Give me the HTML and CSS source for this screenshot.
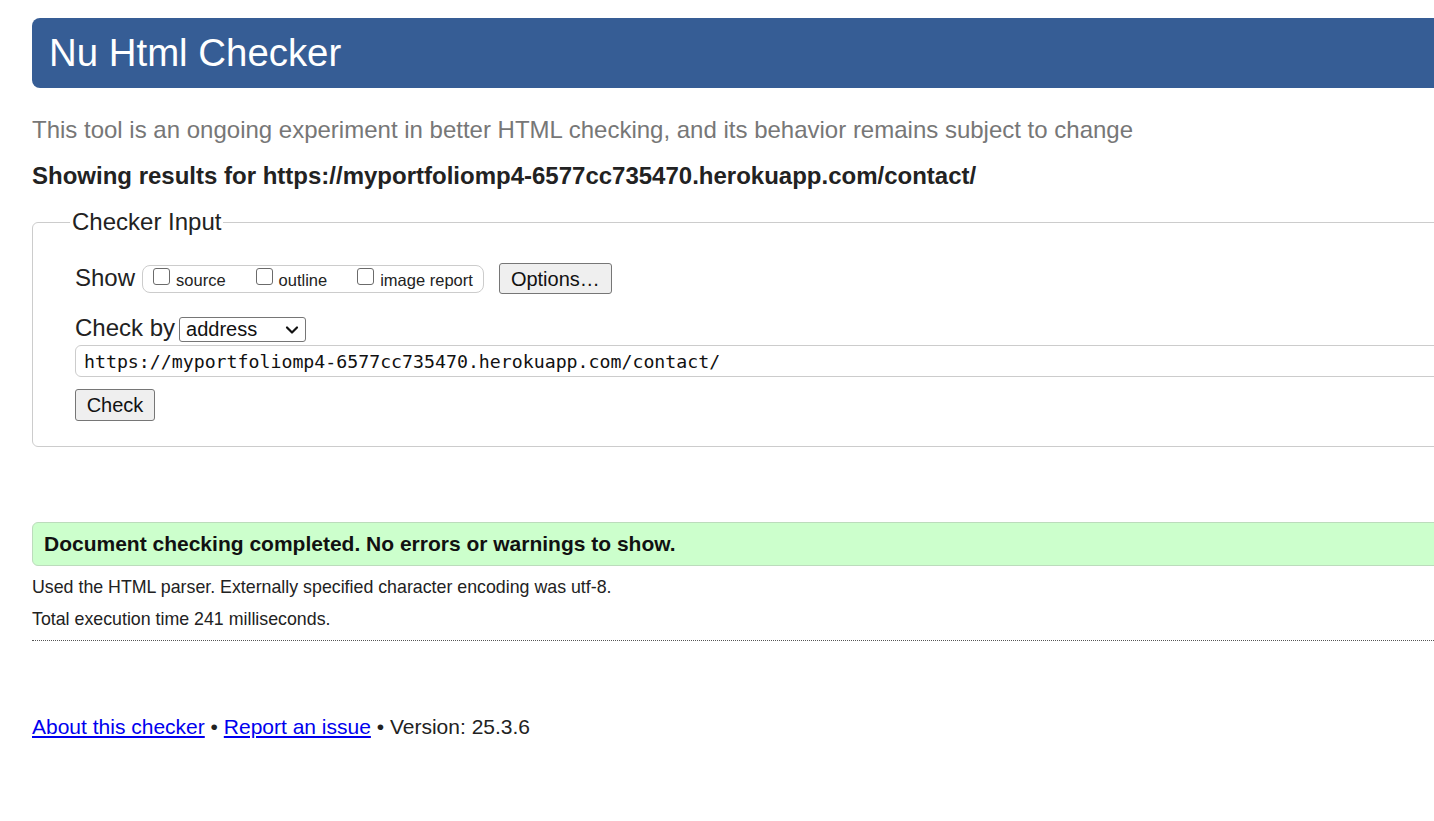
FILE: index.html
```html
<!DOCTYPE html>
<html lang="en">
<head>
<meta charset="utf-8">
<title>Showing results for https://myportfoliomp4-6577cc735470.herokuapp.com/contact/ - Nu Html Checker</title>
<link rel="stylesheet" href="styles.css">
</head>
<body>
<div class="page">
  <h1 class="title">Nu Html Checker</h1>
  <p class="subtitle">This tool is an ongoing experiment in better HTML checking, and its behavior remains subject to change</p>
  <p class="showing">Showing results for https://myportfoliomp4-6577cc735470.herokuapp.com/contact/</p>

  <form class="checker">
    <fieldset class="input-set">
      <legend class="legend">Checker Input</legend>
      <div class="show-row">
        <span class="row-label">Show</span>
        <span class="options-group">
          <label class="opt"><input type="checkbox" class="cb"><span>source</span></label>
          <label class="opt"><input type="checkbox" class="cb"><span>outline</span></label>
          <label class="opt"><input type="checkbox" class="cb"><span>image report</span></label>
        </span>
        <button type="button" class="btn options-btn">Options…</button>
      </div>
      <div class="by-row">
        <span class="row-label">Check by</span>
        <span class="select-wrap">
          <select class="select"><option>address</option></select>
          <svg class="chev" width="14" height="10" viewBox="0 0 14 10"><path d="M2 2.5 L7 7.5 L12 2.5" fill="none" stroke="#111" stroke-width="2.2" stroke-linecap="round" stroke-linejoin="round"/></svg>
        </span>
      </div>
      <input class="url" type="text" value="https://myportfoliomp4-6577cc735470.herokuapp.com/contact/">
      <div class="submit-row">
        <button type="button" class="btn check-btn">Check</button>
      </div>
    </fieldset>
  </form>

  <p class="success">Document checking completed. No errors or warnings to show.</p>
  <p class="details">Used the HTML parser. Externally specified character encoding was utf-8.</p>
  <p class="details last">Total execution time 241 milliseconds.</p>

  <p class="footer"><a href="#">About this checker</a> • <a href="#">Report an issue</a> • Version: 25.3.6</p>
</div>
</body>
</html>
```

FILE: styles.css
```css
html {
  overflow: hidden;
  background: #fff;
}

body {
  margin: 0;
  font-family: "Liberation Sans", Arial, sans-serif;
  color: #222;
}

.page {
  width: 1600px;
  padding: 18px 0 0 32px;
}

.title {
  margin: 0;
  height: 70px;
  line-height: 70px;
  padding-left: 17px;
  background: #365d95;
  color: #fff;
  font-size: 38.4px;
  font-weight: normal;
  border-radius: 8px 0 0 8px;
}

.subtitle {
  margin: 30px 0 0;
  font-size: 24px;
  line-height: 24px;
  color: #777;
}

.showing {
  margin: 22px 0 0;
  font-size: 24px;
  line-height: 24px;
  font-weight: bold;
  color: #222;
}

.checker {
  margin: 22px 0 0;
}

.input-set {
  margin: 0;
  padding: 29px 0 25px 42px;
  border: 1px solid #cccccc;
  border-radius: 6px;
  min-width: 0;
}

.legend {
  margin-left: -5px;
  padding: 0 2px;
  font-size: 24px;
  line-height: 24px;
}

.show-row {
  display: flex;
  align-items: center;
  height: 31px;
}

.row-label {
  font-size: 24px;
  line-height: 24px;
  position: relative;
  top: -1px;
}

.options-group {
  display: flex;
  align-items: center;
  gap: 30px;
  margin-left: 7px;
  height: 26px;
  padding: 0 10px 0 10px;
  border: 1px solid #cccccc;
  border-radius: 8px;
}

.opt {
  display: flex;
  align-items: center;
  font-size: 16.5px;
  line-height: 18px;
}

.opt span {
  margin-left: 6px;
  position: relative;
  top: 1px;
}

.cb {
  appearance: none;
  -webkit-appearance: none;
  margin: 0;
  width: 17px;
  height: 17px;
  border: 1px solid #6b6b6b;
  border-radius: 3px;
  background: #fff;
  position: relative;
  top: -2px;
}

.btn {
  font-family: "Liberation Sans", Arial, sans-serif;
  font-size: 20px;
  line-height: 24px;
  color: #111;
  background: #efefef;
  border: 1px solid #767676;
  border-radius: 3px;
  padding: 0;
}

.options-btn {
  margin-left: 15px;
  width: 113px;
  height: 31px;
}

.by-row {
  display: flex;
  align-items: center;
  margin-top: 22px;
  height: 26px;
}

.select-wrap {
  position: relative;
  margin-left: 4px;
  display: inline-block;
}

.select {
  appearance: none;
  -webkit-appearance: none;
  display: block;
  width: 127px;
  height: 25px;
  padding: 0 0 0 6px;
  font-family: "Liberation Sans", Arial, sans-serif;
  font-size: 20px;
  color: #111;
  background: #fff;
  border: 1px solid #767676;
  border-radius: 3px;
}

.chev {
  position: absolute;
  right: 7px;
  top: 8px;
  pointer-events: none;
}

.url {
  display: block;
  box-sizing: border-box;
  margin: 3px 0 0;
  width: 100%;
  height: 32px;
  padding: 0 8px;
  font-family: "DejaVu Sans Mono", "Liberation Mono", monospace;
  font-size: 18.23px;
  color: #111;
  border: 1px solid #cccccc;
  border-radius: 6px;
  outline: none;
}

.submit-row {
  margin-top: 12px;
}

.check-btn {
  width: 80px;
  height: 32px;
}

.success {
  margin: 75px 0 0;
  box-sizing: border-box;
  height: 44px;
  line-height: 42px;
  padding-left: 11px;
  background: #ccffcc;
  border: 1px solid #bcdcbc;
  border-radius: 6px 0 0 6px;
  font-size: 21px;
  font-weight: bold;
  color: #111;
}

.details {
  margin: 0;
  font-size: 17.8px;
  line-height: 32px;
  color: #222;
}

.success + .details {
  margin-top: 5px;
}

.details.last {
  padding-bottom: 5px;
  border-bottom: 1px dotted #555;
}

.footer {
  margin: 74px 0 0;
  font-size: 21px;
  line-height: 24px;
  color: #222;
}

.footer a {
  color: #0000ee;
  text-decoration: underline;
}
```
